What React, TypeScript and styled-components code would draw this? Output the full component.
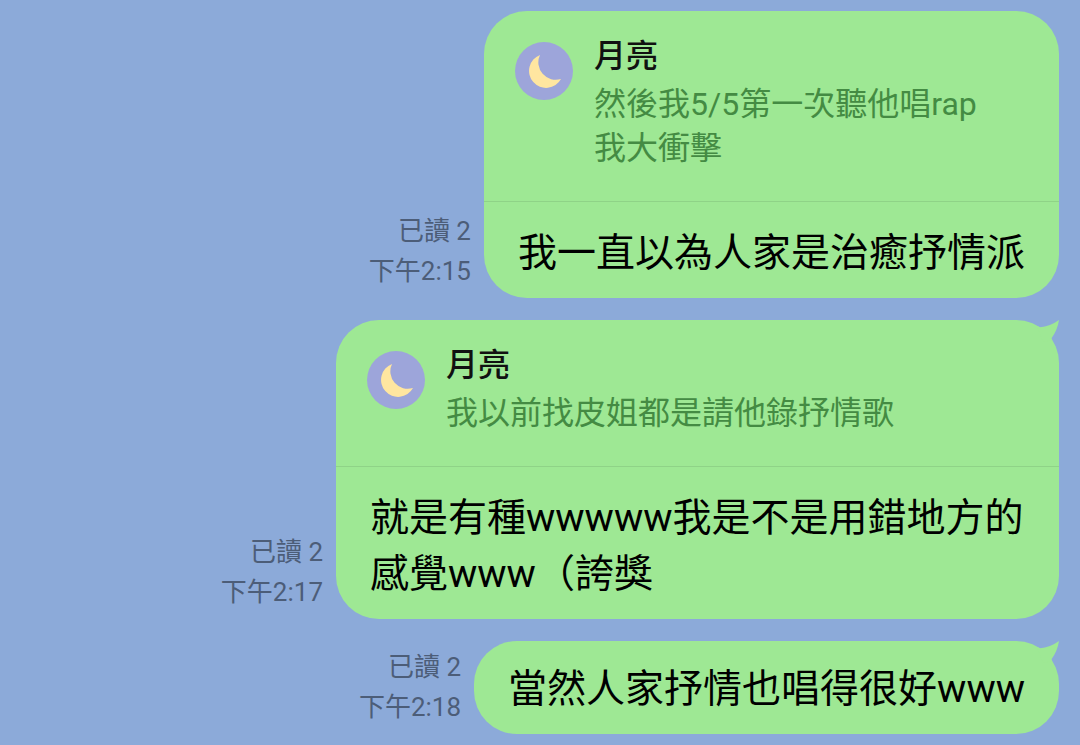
import React from "react";
import styled, { createGlobalStyle } from "styled-components";

const GlobalStyle = createGlobalStyle`
  *, *::before, *::after { box-sizing: border-box; }
  body {
    margin: 0;
    background: #8caad9;
    font-family: Roboto, "Noto Sans CJK TC", sans-serif;
  }
`;

const Chat = styled.main`
  display: flex;
  flex-direction: column;
  gap: 22px;
  min-height: 100vh;
  padding: 11px 21px 11px 16px;
`;

const MessageRow = styled.article`
  display: flex;
  justify-content: flex-end;
  align-items: flex-end;
  gap: 13px;
`;

const Meta = styled.div`
  flex: none;
  padding-bottom: 7px;
  color: #4c5d78;
  font-size: 26px;
  line-height: 40px;
  text-align: right;
  white-space: nowrap;
`;

const MetaLine = styled.div``;

const Bubble = styled.div`
  position: relative;
  max-width: 723px;
  border-radius: 43px;
  background: #9ee894;
`;

const Tail = styled.svg`
  position: absolute;
  top: 0;
  right: 0;
  width: 24px;
  height: 24px;
  fill: #9ee894;
`;

const Quote = styled.section`
  display: flex;
  align-items: flex-start;
  gap: 21px;
  padding: 23px 31px 31px;
  border-bottom: 1px solid #8fd387;
`;

const Avatar = styled.svg`
  flex: none;
  width: 58px;
  height: 58px;
  margin-top: 8px;
`;

const QuoteBody = styled.div`
  display: flex;
  flex-direction: column;
  gap: 3px;
  font-size: 32px;
`;

const Sender = styled.div`
  color: #111;
  font-weight: 500;
  line-height: 45px;
`;

const QuoteText = styled.div`
  color: #448b43;
  line-height: 44px;
  white-space: pre-line;
`;

const Text = styled.p<{ $quoted: boolean }>`
  margin: 0;
  padding: ${(p) => (p.$quoted ? "23px 34px 17px" : "20px 34px 17px")};
  color: #000;
  font-size: 39px;
  line-height: 56px;
`;

interface Message {
  time: string;
  text: string;
  quote?: string;
  tail?: boolean;
}

const messages: Message[] = [
  {
    time: "下午2:15",
    quote: "然後我5/5第一次聽他唱rap\n我大衝擊",
    text: "我一直以為人家是治癒抒情派",
  },
  {
    time: "下午2:17",
    quote: "我以前找皮姐都是請他錄抒情歌",
    text: "就是有種wwwww我是不是用錯地方的感覺www（誇獎",
    tail: true,
  },
  { time: "下午2:18", text: "當然人家抒情也唱得很好www", tail: true },
];

function MoonAvatar() {
  return (
    <Avatar viewBox="0 0 58 58" aria-hidden="true">
      <circle cx="29" cy="29" r="29" fill="#9da5da" />
      <path d="M25 13A17 17 0 1 0 46 37A17.4 17.4 0 0 1 25 13Z" fill="#ffe6a0" />
    </Avatar>
  );
}

export default function App() {
  return (
    <>
      <GlobalStyle />
      <Chat lang="zh-Hant">
        {messages.map((m) => (
          <MessageRow key={m.time}>
            <Meta>
              <MetaLine>已讀 2</MetaLine>
              <MetaLine>{m.time}</MetaLine>
            </Meta>
            <Bubble>
              {m.tail && (
                <Tail viewBox="0 0 24 24" aria-hidden="true">
                  <path d="M2 6L5 7.2Q15 6.5 24 0Q22.5 10 16.5 18.2L17 20L8 22Z" />
                </Tail>
              )}
              {m.quote && (
                <Quote>
                  <MoonAvatar />
                  <QuoteBody>
                    <Sender>月亮</Sender>
                    <QuoteText>{m.quote}</QuoteText>
                  </QuoteBody>
                </Quote>
              )}
              <Text $quoted={Boolean(m.quote)}>{m.text}</Text>
            </Bubble>
          </MessageRow>
        ))}
      </Chat>
    </>
  );
}
